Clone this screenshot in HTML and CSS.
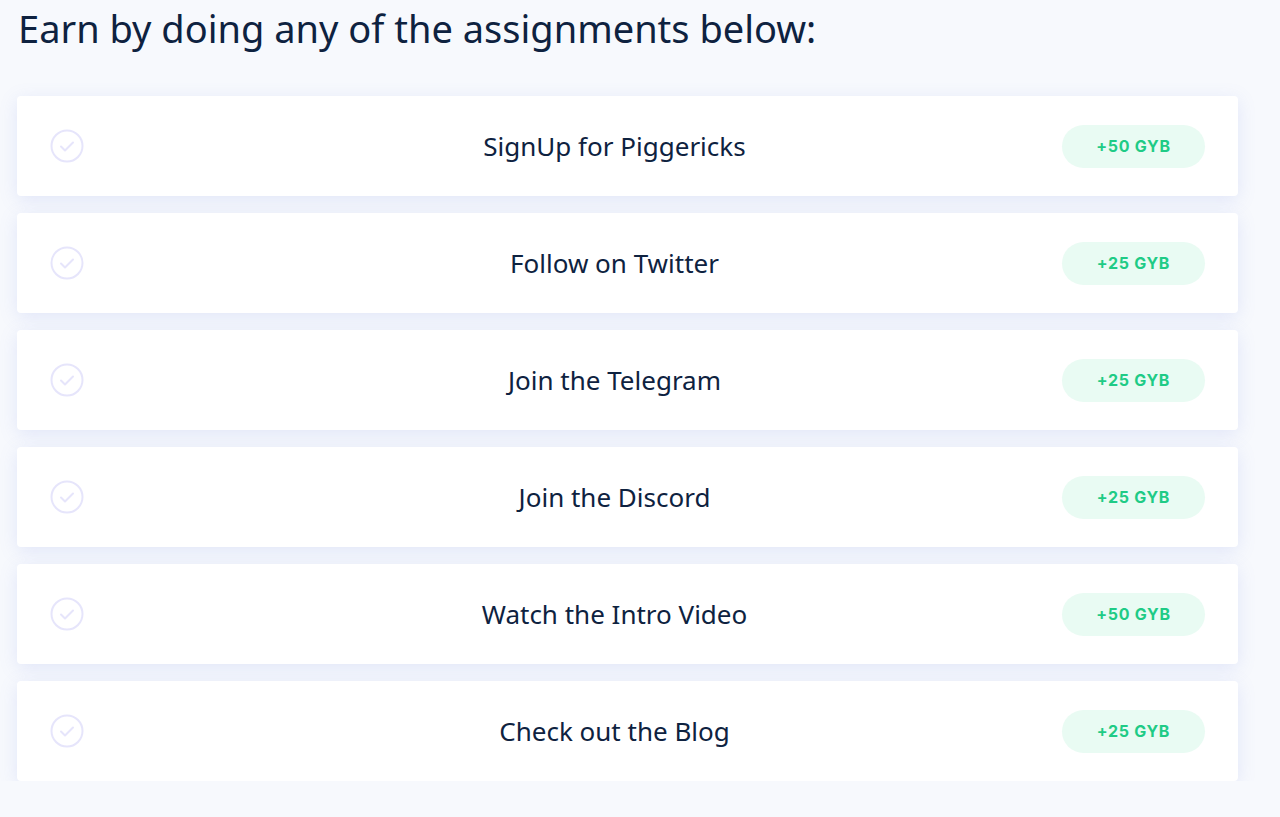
FILE: index.html
```html
<!DOCTYPE html>
<html lang="en">
<head>
    <meta charset="UTF-8">
    <title>Assignments</title>
    <link rel="stylesheet" href="styles.css">
</head>
<body>
    <div class="page">
        <h1>Earn by doing any of the assignments below:</h1>
        <div class="tasks">
            <div class="task">
                <svg class="check" viewBox="0 0 34 34"><circle cx="17" cy="17" r="15.5"/><path d="M11 17.5l4 4 8-8"/></svg>
                <span class="title">SignUp for Piggericks</span>
                <span class="reward">+50 GYB</span>
            </div>
            <div class="task">
                <svg class="check" viewBox="0 0 34 34"><circle cx="17" cy="17" r="15.5"/><path d="M11 17.5l4 4 8-8"/></svg>
                <span class="title">Follow on Twitter</span>
                <span class="reward">+25 GYB</span>
            </div>
            <div class="task">
                <svg class="check" viewBox="0 0 34 34"><circle cx="17" cy="17" r="15.5"/><path d="M11 17.5l4 4 8-8"/></svg>
                <span class="title">Join the Telegram</span>
                <span class="reward">+25 GYB</span>
            </div>
            <div class="task">
                <svg class="check" viewBox="0 0 34 34"><circle cx="17" cy="17" r="15.5"/><path d="M11 17.5l4 4 8-8"/></svg>
                <span class="title">Join the Discord</span>
                <span class="reward">+25 GYB</span>
            </div>
            <div class="task">
                <svg class="check" viewBox="0 0 34 34"><circle cx="17" cy="17" r="15.5"/><path d="M11 17.5l4 4 8-8"/></svg>
                <span class="title">Watch the Intro Video</span>
                <span class="reward">+50 GYB</span>
            </div>
            <div class="task">
                <svg class="check" viewBox="0 0 34 34"><circle cx="17" cy="17" r="15.5"/><path d="M11 17.5l4 4 8-8"/></svg>
                <span class="title">Check out the Blog</span>
                <span class="reward">+25 GYB</span>
            </div>
        </div>
    </div>
</body>
</html>
```

FILE: styles.css
```css
body {
    margin: 0;
    background-color: #f7f9fd;
    font-family: 'Noto Sans', sans-serif;
    color: #0e2240;
}
.page {
    padding: 0 42px 0 17px;
}
h1 {
    margin: 0;
    padding: 4px 0 0 1px;
    font-size: 38px;
    font-weight: 400;
    line-height: 48px;
}
.tasks {
    margin-top: 44px;
    display: flex;
    flex-direction: column;
    gap: 17px;
}
.task {
    height: 100px;
    background: #ffffff;
    border-radius: 4px;
    box-shadow: 0 4px 18px rgba(120, 135, 225, 0.17);
    display: flex;
    align-items: center;
    padding: 0 33px;
}
.check {
    width: 34px;
    height: 34px;
    flex: none;
    fill: none;
    stroke: #e6e5fb;
    stroke-width: 2;
    stroke-linecap: round;
    stroke-linejoin: round;
}
.title {
    flex: 1;
    text-align: center;
    padding-left: 83px;
    font-size: 26px;
}
.reward {
    width: 143px;
    height: 43px;
    flex: none;
    border-radius: 22px;
    background: #e9fbf3;
    color: #1fcb86;
    font-family: 'Inter', sans-serif;
    font-weight: 700;
    font-size: 16px;
    letter-spacing: 0.7px;
    display: flex;
    align-items: center;
    justify-content: center;
}
```
